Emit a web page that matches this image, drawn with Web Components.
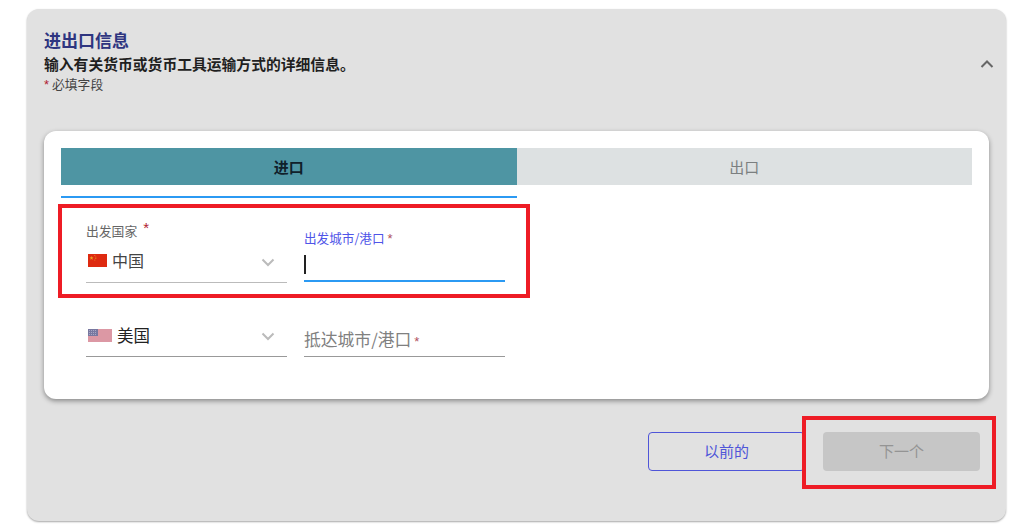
<!DOCTYPE html>
<html lang="zh"><head><meta charset="utf-8">
<style>
html,body{margin:0;background:#fff}
body{width:1024px;height:524px;overflow:hidden;font-family:"Noto Sans CJK SC","Liberation Sans",sans-serif}
</style></head><body>
<trade-panel>
  <span slot="title">进出口信息</span>
  <span slot="sub">输入有关货币或货币工具运输方式的详细信息。</span>
  <span slot="req">必填字段</span>
  <tab-bar></tab-bar>
  <form-row class="first">
    <country-select label="出发国家" name="中国" flag="cn"></country-select>
    <text-field label="出发城市/港口" focused></text-field>
  </form-row>
  <form-row>
    <country-select name="美国" flag="us"></country-select>
    <text-field placeholder="抵达城市/港口"></text-field>
  </form-row>
</trade-panel>
<script>
const def=(n,html)=>customElements.define(n,class extends HTMLElement{
  connectedCallback(){ if(this.shadowRoot) return; const s=this.attachShadow({mode:'open'}); s.innerHTML=typeof html==='function'?html(this):html; }
});
def('trade-panel',`<style>
:host{display:block;position:relative;box-sizing:border-box;width:979px;height:512px;margin:9px 0 0 27px;background:#e1e1e1;border-radius:12px;box-shadow:0 1px 2px rgba(0,0,0,.35);padding:21px 17px 0}
header{position:relative;height:101px}
.t{font-size:17px;line-height:20px;font-weight:700;color:#2e3580}
.s{font-size:14.8px;line-height:22px;margin-top:3px;font-weight:700;color:#1f1f1f}
.r{font-size:12.8px;line-height:18px;margin-top:0;color:#444}
.r i{font-style:normal;color:#b02030;margin-right:3px;font-family:"Liberation Sans",sans-serif}
svg{position:absolute;right:-5px;top:29px}
.card{box-sizing:border-box;width:945px;height:268px;background:#fff;border-radius:12px;box-shadow:0 2px 5px rgba(0,0,0,.4);padding:17px;}
.acts{display:flex;justify-content:flex-end;gap:18px;padding:33px 9px 0 0}
button{box-sizing:border-box;width:157px;height:39px;border-radius:4px;font:15px "Noto Sans CJK SC",sans-serif;padding:0 0 2px 0}
.prev{background:transparent;border:1px solid #4f55d8;color:#4f55d8}
.next{background:#c6c6c6;border:0;color:#949494}
.mark{position:absolute;box-sizing:border-box;border:4.500px solid #ee1c25;pointer-events:none}
</style>
<header><div class="t"><slot name="title"></slot></div><div class="s"><slot name="sub"></slot></div><div class="r"><i>*</i><slot name="req"></slot></div>
<svg width="14" height="10" viewBox="0 0 14 10"><path d="M1.500 8 7 2.500 12.500 8" fill="none" stroke="#666" stroke-width="2"/></svg></header>
<div class="card"><slot></slot></div>
<div class="acts"><button class="prev">以前的</button><button class="next">下一个</button></div>
<div class="mark" style="left:31px;top:195px;width:472px;height:94px"></div>
<div class="mark" style="left:775px;top:407px;width:194px;height:73px"></div>`);
def('tab-bar',`<style>
:host{display:block;width:911px}
.tabs{display:flex;height:37px;font-size:15px;line-height:37px;text-align:center}
.tabs div{flex:1}
.a{background:#4e95a3;color:#10202a;font-weight:700}
.b{background:#dde1e2;color:#7b7f80}
.line{width:456px;height:2px;background:#2b9af3;margin-top:11px}
</style><div class="tabs"><div class="a">进口</div><div class="b">出口</div></div><div class="line"></div>`);
def('form-row',`<style>
:host{display:flex;align-items:flex-start;gap:17px;padding:0 0 0 25px;margin-top:23px}
:host(.first){margin-top:24px}
</style><slot></slot>`);
const cn=`<svg width="19" height="13" viewBox="0 0 19 13"><rect width="19" height="13" fill="#de2a10"/><path d="M3.500 2l.6 1.300 1.400.1-1.100.9.400 1.400-1.300-.8-1.200.8.400-1.400-1.100-.9 1.400-.1z" fill="#e8a020"/><g fill="#e8a020"><circle cx="6.800" cy="1.600" r=".5"/><circle cx="7.800" cy="3" r=".5"/><circle cx="7.800" cy="4.600" r=".5"/><circle cx="6.800" cy="6" r=".5"/></g></svg>`;
const us=`<svg width="24" height="13" viewBox="0 0 24 13"><rect width="24" height="13" fill="#dc98a4"/><rect width="10" height="7" fill="#7878a0"/><path d="M1 1.500h8M1 3.500h8M1 5.500h8" stroke="#a8a8c4" stroke-dasharray="1 1"/></svg>`;
def('country-select',h=>{const u=h.getAttribute('flag')==='us';return `<style>
:host{display:block;box-sizing:border-box;width:201px;height:${u?'51':'61'}px;position:relative;border-bottom:1px solid ${u?'#999':'#bbb'}}
.l{font-size:12.8px;line-height:16px;color:#666;padding-top:1px}
.l i{font-style:normal;color:#b02030;font-size:15px;margin-left:6px;position:relative;top:-3px;font-family:"Liberation Sans",sans-serif}
.v{display:flex;align-items:center;gap:5px;padding-left:2px;font-size:${u?'16.5':'16'}px;line-height:24px;color:${u?'#222':'#444'};margin-top:${u?'17':'9'}px}
svg{display:block}
svg.c{position:absolute;right:12px;bottom:15px}
</style>${u?'':`<div class="l">${h.getAttribute('label')}<i>*</i></div>`}<div class="v">${u?us:cn}<span>${h.getAttribute('name')}</span></div>
<svg class="c" width="14" height="9" viewBox="0 0 14 9"><path d="M1.500 1.500 7 7l5.500-5.500" fill="none" stroke="#bbb" stroke-width="2"/></svg>`});
def('text-field',h=>{const f=h.hasAttribute('focused');return `<style>
:host{display:block;box-sizing:border-box;width:201px;height:${f?'60':'51'}px;position:relative;border-bottom:${f?'2px solid #2b9af3':'1px solid #999'}}
.l{position:absolute;left:0;top:8px;font-size:12.6px;line-height:16px;color:#4f55e8}
.s{color:#b05060;font-family:"Liberation Sans",sans-serif;margin-left:3px;font-size:13px}
.caret{position:absolute;left:0;top:33px;width:2px;height:19px;background:#222}
.p{position:absolute;left:0;bottom:2px;font-size:16.800px;line-height:24px;color:#808080;white-space:nowrap}
</style>${f?`<div class="l">${h.getAttribute('label')}<span class="s">*</span></div><div class="caret"></div>`:`<div class="p">${h.getAttribute('placeholder')}<span class="s">*</span></div>`}`});
</script>
</body></html>
